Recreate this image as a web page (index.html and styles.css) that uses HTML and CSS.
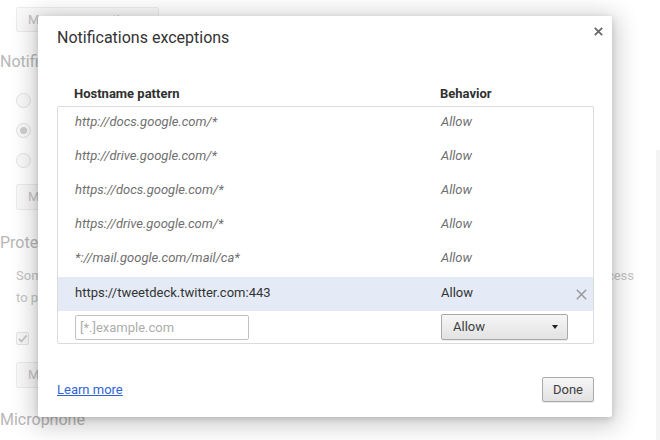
FILE: index.html
```html
<!DOCTYPE html>
<html>
<head>
<meta charset="utf-8">
<link rel="stylesheet" href="styles.css">
</head>
<body>
<div class="page">
  <div class="bg-btn bg-btn-wide">Manage exceptions…</div>
  <div class="bg-title first">Notifications</div>
  <div class="bg-radios">
    <div class="bg-radio-row"><span class="bg-radio"></span></div>
    <div class="bg-radio-row"><span class="bg-radio checked"></span></div>
    <div class="bg-radio-row"><span class="bg-radio"></span></div>
  </div>
  <div class="bg-btn bg-btn-mid">M</div>
  <div class="bg-title second">Protected</div>
  <div class="bg-para">
    <div class="bg-line"><span>Some</span><span>access</span></div>
    <div class="bg-line-2">to play</div>
  </div>
  <div class="bg-check-row"><span class="bg-check"><svg width="11" height="11" viewBox="0 0 11 11"><path d="M2 6 L4.5 8.5 L9.5 2.5" fill="none" stroke="#c4c4c4" stroke-width="1.8"/></svg></span></div>
  <div class="bg-btn bg-btn-mid last">M</div>
  <div class="bg-title third">Microphone</div>
  <div class="scroll-strip"></div>
</div>

<div class="dialog">
  <div class="dlg-head">
    <div class="dlg-title">Notifications exceptions</div>
    <div class="dlg-close"><svg width="9" height="9" viewBox="0 0 9 9"><path d="M0.8 0.8 L8.2 8.2 M8.2 0.8 L0.8 8.2" stroke="#666" stroke-width="1.7" fill="none"/></svg></div>
  </div>
  <div class="list-head">
    <div>Hostname pattern</div>
    <div>Behavior</div>
  </div>
  <div class="list">
    <div class="row"><div class="host">http://docs.google.com/*</div><div class="beh">Allow</div><div></div></div>
    <div class="row"><div class="host">http://drive.google.com/*</div><div class="beh">Allow</div><div></div></div>
    <div class="row"><div class="host">https://docs.google.com/*</div><div class="beh">Allow</div><div></div></div>
    <div class="row"><div class="host">https://drive.google.com/*</div><div class="beh">Allow</div><div></div></div>
    <div class="row"><div class="host">*://mail.google.com/mail/ca*</div><div class="beh">Allow</div><div></div></div>
    <div class="row selected"><div class="host">https://tweetdeck.twitter.com:443</div><div class="beh">Allow</div><div class="row-x"><svg width="11" height="11" viewBox="0 0 11 11"><path d="M0.8 0.8 L10.2 10.2 M10.2 0.8 L0.8 10.2" stroke="#9a9a9a" stroke-width="1.5" fill="none"/></svg></div></div>
    <div class="row input-row">
      <div><input class="pattern" type="text" placeholder="[*.]example.com"></div>
      <div><div class="select"><span>Allow</span><span class="arrow"></span></div></div>
      <div></div>
    </div>
  </div>
  <div class="dlg-foot">
    <a class="learn" href="#">Learn more</a>
    <button class="done">Done</button>
  </div>
</div>
</body>
</html>
```
FILE: styles.css
```css
html, body {
  margin: 0;
  padding: 0;
  background: #fff;
  width: 660px;
  height: 440px;
  overflow: hidden;
  font-family: Roboto, "Liberation Sans", sans-serif;
}

.page {
  position: relative;
  padding-top: 7px;
  height: 433px;
  color: #bdbdbd;
}

.bg-btn {
  box-sizing: border-box;
  margin-left: 16px;
  height: 25px;
  border: 1px solid #ececec;
  border-radius: 2px;
  background: #f9f9f9;
  font-size: 13px;
  line-height: 23px;
  padding-left: 11px;
  color: #c2c2c2;
  white-space: nowrap;
  overflow: hidden;
}
.bg-btn-wide { width: 143px; }
.bg-btn-mid { width: 143px; height: 26px; margin-top: 16px; line-height: 24px; }
.bg-btn-mid.last { margin-top: 17px; }

.bg-title {
  font-size: 16px;
  line-height: 20px;
  color: #b8b8b8;
  white-space: nowrap;
}
.bg-title.first { margin-top: 20px; }
.bg-title.second { margin-top: 23px; }
.bg-title.third { margin-top: 22px; }

.bg-radios {
  margin-top: 21px;
  padding-left: 16px;
  display: flex;
  flex-direction: column;
  gap: 15px;
}
.bg-radio-row { display: flex; align-items: center; height: 15px; }
.bg-radio {
  box-sizing: border-box;
  width: 15px;
  height: 15px;
  border: 1px solid #e2e2e2;
  border-radius: 50%;
  background: #fafafa;
  display: flex;
  align-items: center;
  justify-content: center;
}
.bg-radio.checked::after {
  content: "";
  width: 7px;
  height: 7px;
  border-radius: 50%;
  background: #cfcfcf;
}

.bg-para {
  margin-top: 12px;
  padding-left: 16px;
  width: 618px;
  font-size: 13px;
  line-height: 22px;
  color: #c4c4c4;
}
.bg-line { display: flex; justify-content: space-between; white-space: nowrap; }
.bg-line-2 { white-space: nowrap; }

.bg-check-row { margin-top: 23px; padding-left: 16px; height: 13px; }
.bg-check {
  box-sizing: border-box;
  display: flex;
  align-items: center;
  justify-content: center;
  width: 13px;
  height: 13px;
  border: 1px solid #e4e4e4;
  border-radius: 2px;
  background: #f8f8f8;
}

.scroll-strip {
  position: absolute;
  right: 0;
  top: 150px;
  width: 4px;
  height: 290px;
  background: #f4f4f4;
}

/* dialog */
.dialog {
  position: absolute;
  left: 38px;
  top: 16px;
  width: 574px;
  box-sizing: border-box;
  padding: 12px 18px 15px 19px;
  background: #fff;
  border-radius: 2px;
  box-shadow: 0 4px 23px 5px rgba(0,0,0,0.2), 0 2px 6px rgba(0,0,0,0.15);
  color: #333;
}

.dlg-head {
  display: flex;
  justify-content: space-between;
  align-items: flex-start;
  height: 20px;
}
.dlg-title {
  font-size: 16px;
  line-height: 20px;
  color: #333;
}
.dlg-close {
  margin-top: -1px;
  margin-right: -9px;
  width: 9px;
  height: 9px;
  display: flex;
}

.list-head {
  margin-top: 38px;
  margin-bottom: 4px;
  height: 16px;
  display: grid;
  grid-template-columns: 366px 1fr;
  padding-left: 17px;
  font-size: 13px;
  line-height: 16px;
  font-weight: bold;
  color: #303030;
}

.list {
  border: 1px solid #dcdcdc;
  border-radius: 2px;
}
.row {
  display: grid;
  grid-template-columns: 366px 1fr 11px;
  padding: 0 6px 4px 17px;
  height: 34px;
  box-sizing: border-box;
  align-items: center;
  font-size: 13px;
  line-height: 30px;
  font-style: italic;
  color: #6f6f6f;
  white-space: nowrap;
}
.row.selected {
  background: #e4ebf6;
  font-style: normal;
  color: #333;
}
.row-x { display: flex; align-items: center; height: 30px; padding-top: 2px; }
.row.input-row {
  height: 32px;
  padding-bottom: 0;
  font-style: normal;
}

.pattern {
  display: block;
  box-sizing: border-box;
  width: 174px;
  height: 25px;
  margin: 0;
  border: 1px solid #c2c2c2;
  border-radius: 2px;
  padding: 0 4px;
  font-family: Roboto, "Liberation Sans", sans-serif;
  font-size: 13px;
  color: #333;
  outline: none;
}
.pattern::placeholder { color: #adadad; }

.select {
  box-sizing: border-box;
  width: 127px;
  height: 26px;
  display: flex;
  align-items: center;
  justify-content: space-between;
  padding: 0 9px 0 11px;
  border: 1px solid #a9a9a9;
  border-radius: 2px;
  background: linear-gradient(#f6f6f6, #e2e2e2);
  box-shadow: 0 1px 0 rgba(0,0,0,0.08);
  font-size: 13px;
  line-height: 24px;
  color: #3d3d3d;
}
.arrow {
  width: 0;
  height: 0;
  border-left: 3.5px solid transparent;
  border-right: 3.5px solid transparent;
  border-top: 4px solid #222;
}

.dlg-foot {
  margin-top: 33px;
  display: flex;
  justify-content: space-between;
  align-items: center;
}
.learn {
  font-size: 13px;
  line-height: 16px;
  color: #2f64d6;
  text-decoration: underline;
}
.done {
  box-sizing: border-box;
  width: 52px;
  height: 25px;
  margin: 0;
  padding: 0;
  border: 1px solid #a9a9a9;
  border-radius: 2px;
  background: linear-gradient(#f6f6f6, #e2e2e2);
  box-shadow: 0 1px 0 rgba(0,0,0,0.08);
  font-family: Roboto, "Liberation Sans", sans-serif;
  font-size: 13px;
  color: #3d3d3d;
}
```
